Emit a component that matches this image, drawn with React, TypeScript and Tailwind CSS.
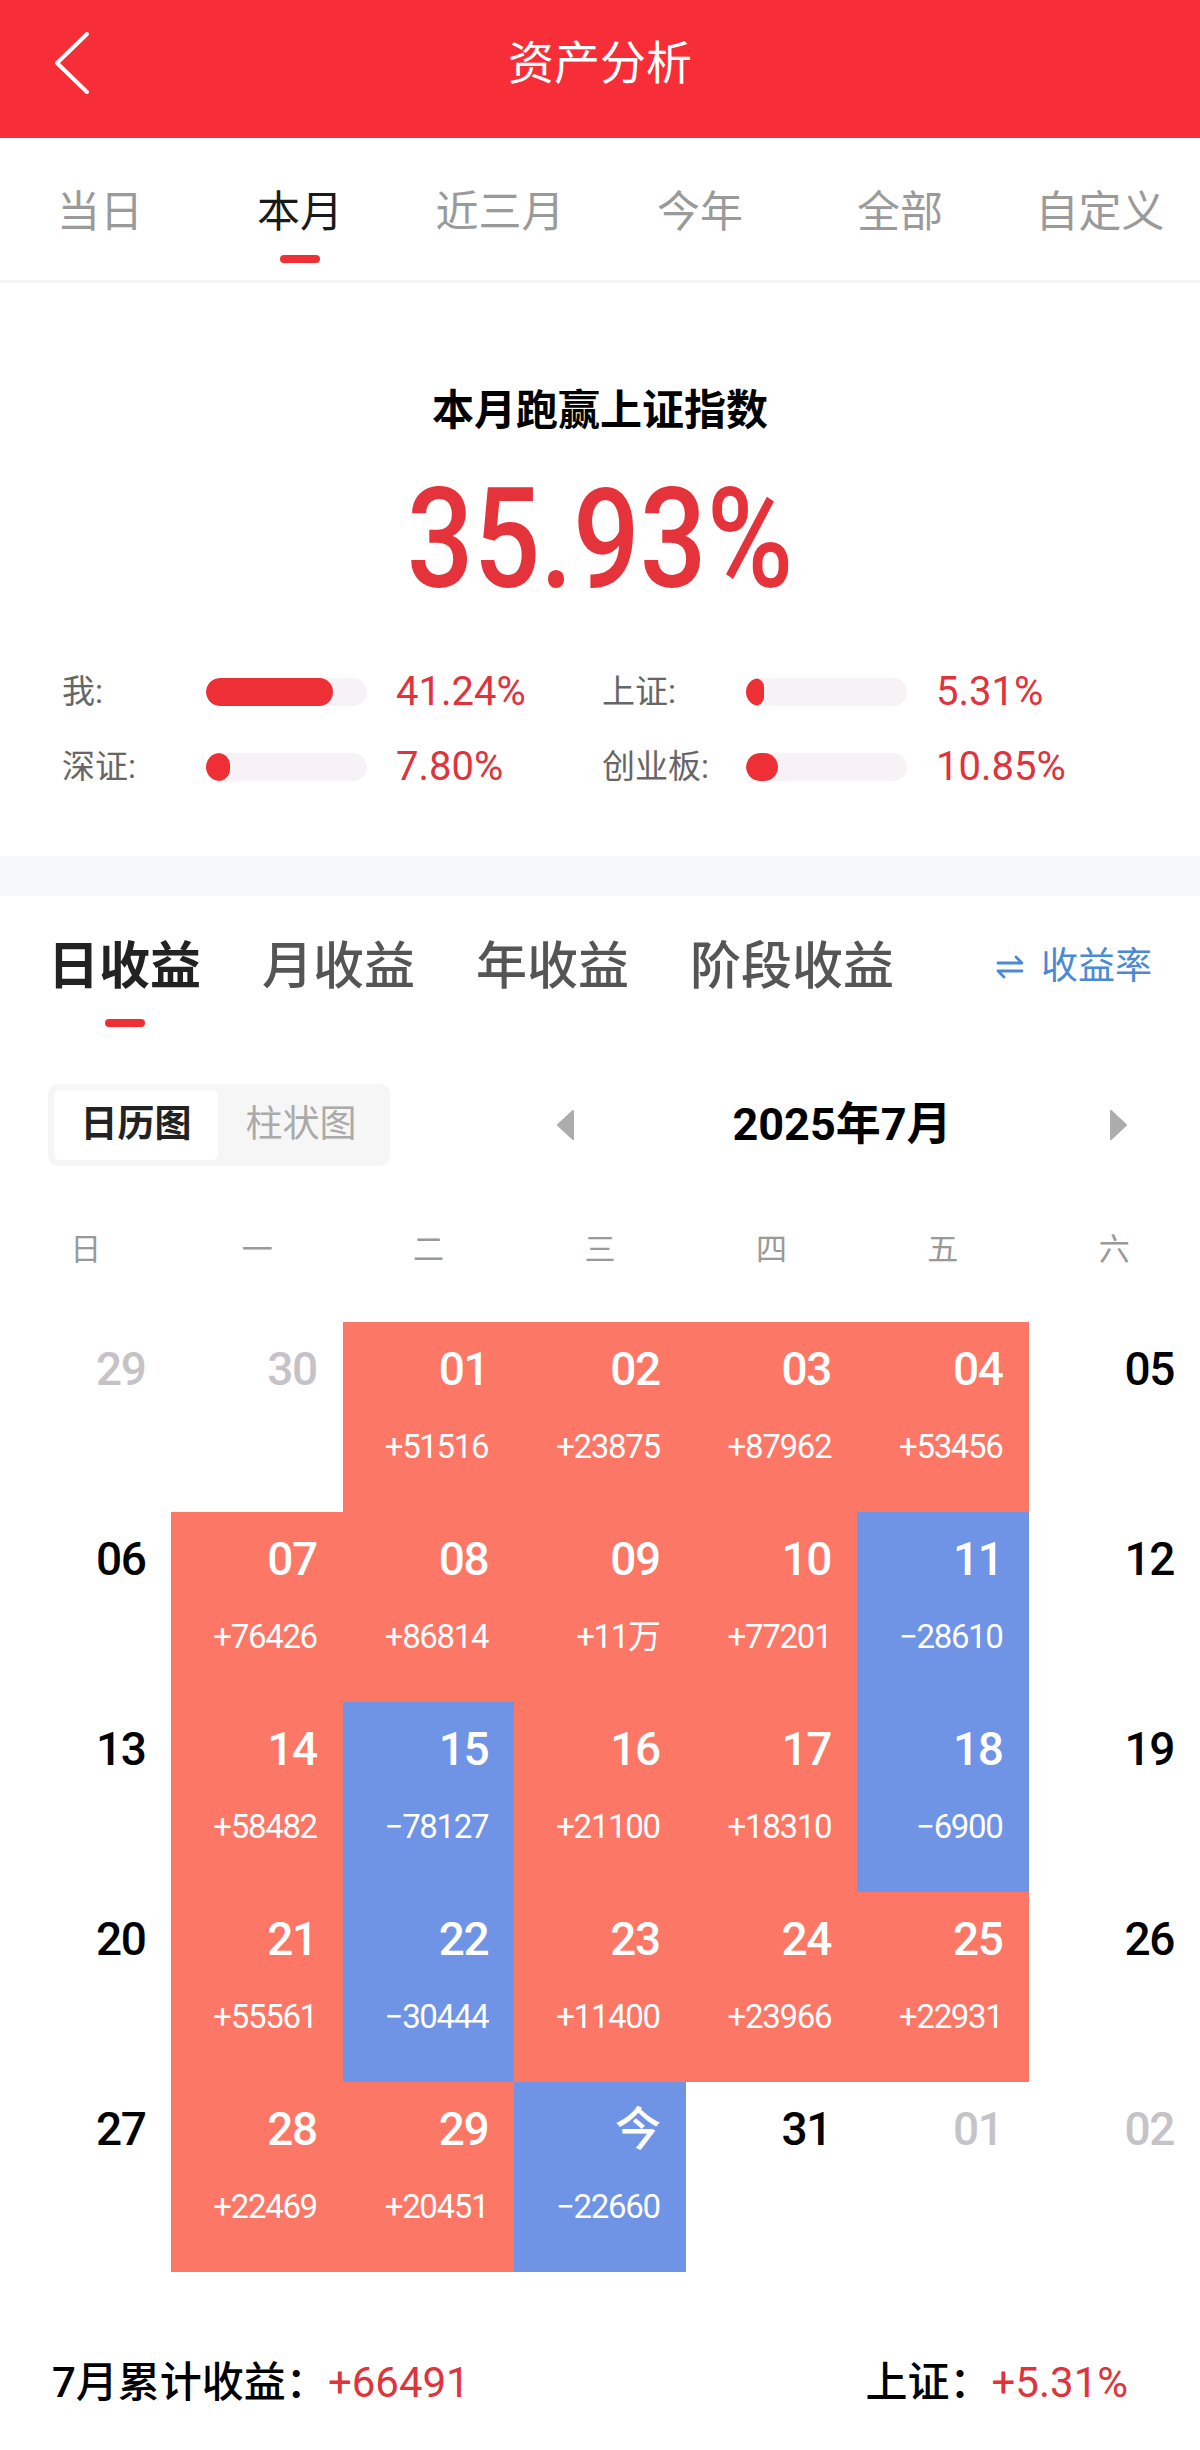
import React from "react";

type Kind = "out" | "plain" | "up" | "down";
type Cell = { d: string; kind: Kind; amt?: string };

const periodTabs = ["当日", "本月", "近三月", "今年", "全部", "自定义"];
const earnTabs = ["日收益", "月收益", "年收益", "阶段收益"];
const weekdays = ["日", "一", "二", "三", "四", "五", "六"];

const stats = [
  { label: "我:", fill: 127, value: "41.24%" },
  { label: "上证:", fill: 18, value: "5.31%" },
  { label: "深证:", fill: 24, value: "7.80%" },
  { label: "创业板:", fill: 32, value: "10.85%" },
];

const weeks: Cell[][] = [
  [
    { d: "29", kind: "out" },
    { d: "30", kind: "out" },
    { d: "01", kind: "up", amt: "+51516" },
    { d: "02", kind: "up", amt: "+23875" },
    { d: "03", kind: "up", amt: "+87962" },
    { d: "04", kind: "up", amt: "+53456" },
    { d: "05", kind: "plain" },
  ],
  [
    { d: "06", kind: "plain" },
    { d: "07", kind: "up", amt: "+76426" },
    { d: "08", kind: "up", amt: "+86814" },
    { d: "09", kind: "up", amt: "+11万" },
    { d: "10", kind: "up", amt: "+77201" },
    { d: "11", kind: "down", amt: "−28610" },
    { d: "12", kind: "plain" },
  ],
  [
    { d: "13", kind: "plain" },
    { d: "14", kind: "up", amt: "+58482" },
    { d: "15", kind: "down", amt: "−78127" },
    { d: "16", kind: "up", amt: "+21100" },
    { d: "17", kind: "up", amt: "+18310" },
    { d: "18", kind: "down", amt: "−6900" },
    { d: "19", kind: "plain" },
  ],
  [
    { d: "20", kind: "plain" },
    { d: "21", kind: "up", amt: "+55561" },
    { d: "22", kind: "down", amt: "−30444" },
    { d: "23", kind: "up", amt: "+11400" },
    { d: "24", kind: "up", amt: "+23966" },
    { d: "25", kind: "up", amt: "+22931" },
    { d: "26", kind: "plain" },
  ],
  [
    { d: "27", kind: "plain" },
    { d: "28", kind: "up", amt: "+22469" },
    { d: "29", kind: "up", amt: "+20451" },
    { d: "今", kind: "down", amt: "−22660" },
    { d: "31", kind: "plain" },
    { d: "01", kind: "out" },
    { d: "02", kind: "out" },
  ],
];

const cellClass = (k: Kind) => {
  if (k === "up") return "bg-[#fd7766] text-white";
  if (k === "down") return "bg-[#6f93e5] text-white";
  if (k === "out") return "bg-white text-[#c6c3c8]";
  return "bg-white text-black";
};

const App = () => {
  return (
    <div className="w-[1200px] min-h-[2450px] bg-white font-['Roboto','Noto_Sans_CJK_SC',sans-serif]">
      {/* header */}
      <header className="h-[138px] bg-[#f72e37]">
        <div className="flex items-center h-[126px]">
          <div className="w-[200px] pl-[52px] flex items-center">
            <svg width="40" height="64" viewBox="0 0 40 64" fill="none">
              <polyline
                points="35,3 5,32 35,61"
                stroke="white"
                strokeWidth="4"
                strokeLinecap="round"
                strokeLinejoin="round"
              />
            </svg>
          </div>
          <h1 className="flex-1 text-center text-white text-[46px] leading-[52px]">
            资产分析
          </h1>
          <div className="w-[200px]" />
        </div>
      </header>

      {/* period tabs */}
      <nav className="grid grid-cols-6 h-[145px] border-b-[3px] border-[#f4f4f4]">
        {periodTabs.map((t, i) => (
          <div key={t} className="flex flex-col items-center pt-[52px]">
            <span
              className={
                i === 1
                  ? "text-[43px] leading-[44px] text-[#1a1a1a]"
                  : "text-[43px] leading-[44px] text-[#9a9a9a]"
              }
            >
              {t}
            </span>
            {i === 1 && (
              <span className="mt-[21px] w-[40px] h-[8px] rounded-full bg-[#ee2f36]" />
            )}
          </div>
        ))}
      </nav>

      {/* summary */}
      <section className="pt-[103px] pb-[67px]">
        <h2 className="text-center text-[42px] leading-[50px] font-bold text-black">
          本月跑赢上证指数
        </h2>
        <div className="mt-[33px] text-center text-[140px] leading-[140px] font-medium text-[#e5333b] scale-x-[0.84]">
          35.93%
        </div>
        <div className="mt-[61px] px-[62px] grid grid-cols-[540px_1fr] gap-y-[31px]">
          {stats.map((s) => (
            <div key={s.label} className="flex items-center h-[44px]">
              <span className="w-[144px] text-[33px] text-[#666]">{s.label}</span>
              <div className="w-[161px] h-[28px] rounded-full bg-[#f6f2f6] overflow-hidden">
                <div
                  className="h-full rounded-full bg-[#ee2f36]"
                  style={{ width: s.fill }}
                />
              </div>
              <span className="ml-[29px] text-[40px] text-[#e0333c]">{s.value}</span>
            </div>
          ))}
        </div>
      </section>

      <div className="h-[40px] bg-[#f7f8fc]" />

      {/* earnings */}
      <section>
        <div className="flex items-start pt-[42px] pl-[48px] pr-[48px]">
          <div className="flex gap-[61px]">
            {earnTabs.map((t, i) => (
              <div key={t} className="flex flex-col items-center">
                <span
                  className={
                    i === 0
                      ? "text-[51px] leading-[58px] font-bold text-[#222]"
                      : "text-[51px] leading-[58px] font-medium text-[#555]"
                  }
                >
                  {t}
                </span>
                {i === 0 && (
                  <span className="mt-[23px] w-[40px] h-[8px] rounded-full bg-[#ee2f36]" />
                )}
              </div>
            ))}
          </div>
          <div className="ml-auto flex items-center gap-[16px] h-[58px] text-[37px] text-[#4a89d6]">
            <svg width="30" height="26" viewBox="0 0 30 26" fill="none">
              <path
                d="M3 9H27L21 3M27 17H3L9 23"
                stroke="#4a89d6"
                strokeWidth="2.8"
                strokeLinecap="round"
                strokeLinejoin="round"
              />
            </svg>
            <span>收益率</span>
          </div>
        </div>

        {/* toggle + month */}
        <div className="mt-[57px] pl-[48px] flex items-center">
          <div className="flex p-[6px] rounded-[10px] bg-[#f6f6f6] h-[82px]">
            <div className="w-[164px] rounded-[6px] bg-white flex items-center justify-center text-[37px] font-bold text-[#222]">
              日历图
            </div>
            <div className="w-[166px] flex items-center justify-center text-[37px] text-[#aaa]">
              柱状图
            </div>
          </div>
          <div className="flex-1 flex items-center pl-[166px] pr-[72px]">
            <svg width="18" height="30" viewBox="0 0 18 30">
              <path d="M17 1L2 15L17 29Z" fill="#acacac" strokeLinejoin="round" stroke="#acacac" strokeWidth="2" />
            </svg>
            <div className="flex-1 text-center text-[45px] font-bold text-black">
              2025年7月
            </div>
            <svg width="18" height="30" viewBox="0 0 18 30">
              <path d="M1 1L16 15L1 29Z" fill="#acacac" strokeLinejoin="round" stroke="#acacac" strokeWidth="2" />
            </svg>
          </div>
        </div>

        {/* weekdays */}
        <div className="mt-[64px] grid grid-cols-7">
          {weekdays.map((w) => (
            <div key={w} className="text-center text-[31px] leading-[40px] text-[#999]">
              {w}
            </div>
          ))}
        </div>

        {/* calendar */}
        <div className="mt-[52px] grid grid-cols-7">
          {weeks.flat().map((c, i) => (
            <div
              key={i}
              className={`h-[190px] flex flex-col items-end pt-[22px] pr-[26px] ${cellClass(c.kind)}`}
            >
              <span className="text-[46px] leading-[50px] font-medium tracking-[-0.03em]">
                {c.d}
              </span>
              {c.amt && (
                <span className="mt-[33px] text-[33px] leading-[40px] tracking-[-0.04em]">
                  {c.amt}
                </span>
              )}
            </div>
          ))}
        </div>

        {/* footer */}
        <div className="mt-[86px] pl-[52px] pr-[72px] flex items-center justify-between text-[42px] leading-[50px]">
          <div>
            <span className="font-medium text-black">7月累计收益：</span>
            <span className="text-[#e0333c]">+66491</span>
          </div>
          <div>
            <span className="font-medium text-black">上证：</span>
            <span className="text-[#e0333c]">+5.31%</span>
          </div>
        </div>
      </section>
    </div>
  );
};

export default App;
